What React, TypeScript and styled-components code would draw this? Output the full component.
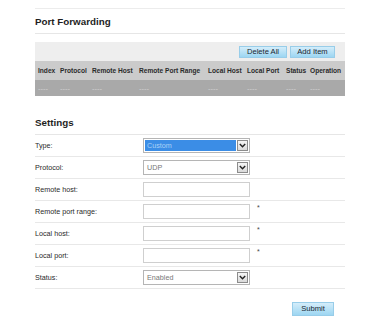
import React from "react";
import styled, { createGlobalStyle } from "styled-components";

const GlobalStyle = createGlobalStyle`
  html, body {
    margin: 0;
    padding: 0;
    background: #ffffff;
    font-family: "Liberation Sans", Arial, sans-serif;
    color: #333;
  }
`;

const Page = styled.div`
  width: 310px;
  padding: 8px 0 0 35px;
`;

const TopRule = styled.div`
  border-top: 1px solid #ececec;
`;

const SectionTitle = styled.h2<{ $top: number }>`
  margin: ${(p) => p.$top}px 0 0 0;
  padding-top: 2px;
  height: 22px;
  line-height: 22px;
  font-size: 9.8px;
  font-weight: bold;
  color: #1e1e1e;
  border-bottom: 1px solid #e6e6e6;
`;

const TableBlock = styled.div`
  margin-top: 8px;
`;

const Toolbar = styled.div`
  height: 19px;
  background: #eeeeee;
  display: flex;
  justify-content: flex-end;
  align-items: center;
  gap: 3px;
  padding-right: 10px;
`;

const BlueButton = styled.button<{ $w: number; $h: number }>`
  width: ${(p) => p.$w}px;
  height: ${(p) => p.$h}px;
  padding: 0;
  margin: 0;
  border: 1px solid #98cde9;
  background: linear-gradient(#d4edfa, #9dd6f2);
  color: #1a2630;
  font-family: "Liberation Sans", Arial, sans-serif;
  font-size: 7.6px;
  line-height: 1;
  display: flex;
  align-items: center;
  justify-content: center;
  box-sizing: border-box;
`;

const GridRow = styled.div<{ $bg: string; $h: number }>`
  display: grid;
  grid-template-columns: 22px 32px 47px 69px 39px 39px 24px 38px;
  height: ${(p) => p.$h}px;
  align-items: center;
  background: ${(p) => p.$bg};
`;

const HeadCell = styled.div`
  padding-left: 3px;
  font-size: 6.6px;
  font-weight: bold;
  color: #2a2a2a;
  white-space: nowrap;
`;

const DataCell = styled.div`
  padding-left: 3px;
  font-size: 7.6px;
  color: #d2d2d2;
  white-space: nowrap;
`;

const FormRow = styled.div`
  display: grid;
  grid-template-columns: 108px 107px auto;
  height: 21px;
  align-items: center;
  border-bottom: 1px solid #e8e8e8;
`;

const Label = styled.div`
  font-size: 7.2px;
  color: #2a2a2a;
`;

const TextBox = styled.div`
  width: 107px;
  height: 15px;
  box-sizing: border-box;
  border: 1px solid #cfcfcf;
  background: #fff;
`;

const Required = styled.span`
  align-self: start;
  margin: 3px 0 0 7px;
  font-size: 7px;
  color: #444;
`;

const SelectBox = styled.div`
  width: 107px;
  height: 15px;
  box-sizing: border-box;
  border: 1px solid #b5b5b5;
  background: #fff;
  display: flex;
  align-items: center;
  padding: 1px;
  gap: 1px;
`;

const SelectValue = styled.div<{ $active?: boolean }>`
  flex: 1;
  height: 100%;
  display: flex;
  align-items: center;
  padding-left: 2px;
  font-size: 7.2px;
  background: ${(p) => (p.$active ? "#3b8de6" : "transparent")};
  color: ${(p) => (p.$active ? "#a9d1f6" : "#777")};
`;

const ArrowBox = styled.div`
  width: 11px;
  height: 11px;
  box-sizing: border-box;
  border: 1px solid #8c8c8c;
  background: linear-gradient(#f6f6f6, #dadada);
  display: flex;
  align-items: center;
  justify-content: center;
`;

const Footer = styled.div`
  display: flex;
  justify-content: flex-end;
  padding-right: 11px;
  margin-top: 13px;
`;

const Chevron = () => (
  <svg width="7" height="5" viewBox="0 0 7 5">
    <polyline points="0.8,1 3.5,3.8 6.2,1" fill="none" stroke="#222" strokeWidth="1.4" />
  </svg>
);

const Select = ({ value, active }: { value: string; active?: boolean }) => (
  <SelectBox>
    <SelectValue $active={active}>{value}</SelectValue>
    <ArrowBox>
      <Chevron />
    </ArrowBox>
  </SelectBox>
);

const headers = [
  "Index",
  "Protocol",
  "Remote Host",
  "Remote Port Range",
  "Local Host",
  "Local Port",
  "Status",
  "Operation",
];

type Field = {
  label: string;
  kind: "select" | "input";
  value?: string;
  active?: boolean;
  required?: boolean;
};

const fields: Field[] = [
  { label: "Type:", kind: "select", value: "Custom", active: true },
  { label: "Protocol:", kind: "select", value: "UDP" },
  { label: "Remote host:", kind: "input" },
  { label: "Remote port range:", kind: "input", required: true },
  { label: "Local host:", kind: "input", required: true },
  { label: "Local port:", kind: "input", required: true },
  { label: "Status:", kind: "select", value: "Enabled" },
];

export default function App() {
  return (
    <>
      <GlobalStyle />
      <Page>
        <TopRule />
        <SectionTitle $top={0}>Port Forwarding</SectionTitle>
        <TableBlock>
          <Toolbar>
            <BlueButton $w={48} $h={12}>Delete All</BlueButton>
            <BlueButton $w={45} $h={12}>Add Item</BlueButton>
          </Toolbar>
          <GridRow $bg="#cbcbcb" $h={19}>
            {headers.map((h) => (
              <HeadCell key={h}>{h}</HeadCell>
            ))}
          </GridRow>
          <GridRow $bg="#a9a9a9" $h={16}>
            {headers.map((h) => (
              <DataCell key={h}>----</DataCell>
            ))}
          </GridRow>
        </TableBlock>
        <SectionTitle $top={14}>Settings</SectionTitle>
        {fields.map((f) => (
          <FormRow key={f.label}>
            <Label>{f.label}</Label>
            {f.kind === "select" ? (
              <Select value={f.value || ""} active={f.active} />
            ) : (
              <TextBox />
            )}
            {f.required ? <Required>*</Required> : <span />}
          </FormRow>
        ))}
        <Footer>
          <BlueButton $w={42} $h={14}>Submit</BlueButton>
        </Footer>
      </Page>
    </>
  );
}
